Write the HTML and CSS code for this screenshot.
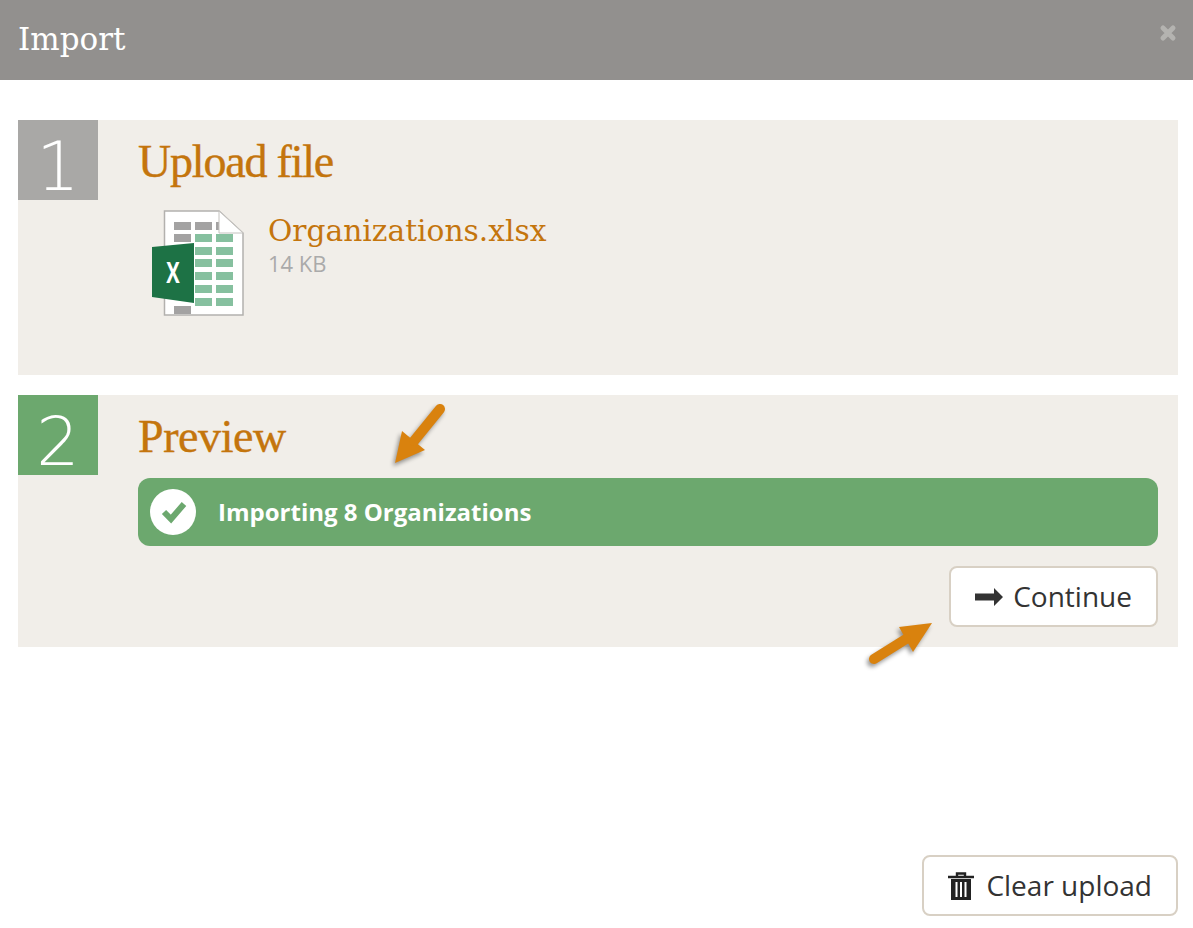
FILE: index.html
```html
<!DOCTYPE html>
<html lang="en">
<head>
  <meta charset="UTF-8" />
  <meta name="viewport" content="width=device-width, initial-scale=1.0" />
  <title>Import</title>
  <link rel="stylesheet" href="styles.css">
</head>
<body>
  <header class="modal-header">
    <h1>Import</h1>
    <svg class="close-icon" viewBox="0 0 18 18" width="18" height="18">
      <path d="M4 4 L14 14 M14 4 L4 14" stroke="#b4b3b0" stroke-width="5" stroke-linecap="round" />
    </svg>
  </header>

  <main class="modal-body">
    <section class="step step-upload">
      <div class="step-number">1</div>
      <div class="step-content">
        <h2>Upload file</h2>
        <div class="file">
          <svg class="file-icon" viewBox="0 0 92 106" width="92" height="106">
            <path d="M12.5 1 H67 L91 23 V105 H12.5 Z" fill="#fff" stroke="#b3b1ae" stroke-width="1.5" />
            <g fill="#a3a2a2">
              <rect x="22" y="12" width="17" height="8" />
              <rect x="43" y="12" width="17" height="8" />
              <rect x="64" y="12" width="4" height="8" />
              <rect x="22" y="24" width="17" height="8" />
              <rect x="22" y="96" width="17" height="8" />
            </g>
            <path d="M67 1 V23 H91 Z" fill="#fff" stroke="#c4c2bf" stroke-width="1" />
            <g fill="#86c09f">
              <rect x="43" y="24" width="17" height="8" />
              <rect x="64" y="24" width="17" height="8" />
              <rect x="43" y="37" width="17" height="8" />
              <rect x="64" y="37" width="17" height="8" />
              <rect x="43" y="49" width="17" height="8" />
              <rect x="64" y="49" width="17" height="8" />
              <rect x="43" y="62" width="17" height="8" />
              <rect x="64" y="62" width="17" height="8" />
              <rect x="43" y="75" width="17" height="8" />
              <rect x="64" y="75" width="17" height="8" />
              <rect x="43" y="88" width="17" height="8" />
              <rect x="64" y="88" width="17" height="8" />
            </g>
            <path d="M0 37 L42 33 V93 L0 87 Z" fill="#1d7245" />
            <text class="file-icon-x" transform="translate(21 73) scale(0.72 1)">X</text>
          </svg>
          <div class="file-info">
            <a class="file-name">Organizations.xlsx</a>
            <span class="file-size">14 KB</span>
          </div>
        </div>
      </div>
    </section>

    <section class="step step-preview">
      <div class="step-number done">2</div>
      <div class="step-content">
        <h2>Preview</h2>
        <div class="status">
          <svg class="status-icon" viewBox="0 0 48 48" width="48" height="48">
            <circle cx="24" cy="24" r="23" fill="#fff" />
            <path d="M15 24 L22 31 L35 16" fill="none" stroke="#6ca86e" stroke-width="6" />
          </svg>
          <span class="status-text">Importing 8 Organizations</span>
        </div>
        <div class="actions">
          <button class="btn">
            <svg viewBox="0 0 28 18" width="28" height="18"><path d="M0 5.5 H19 V0 L28 9 L19 18 V12.5 H0 Z" fill="#333" /></svg>
            <span class="btn-label">Continue</span>
          </button>
        </div>
      </div>
    </section>
  </main>

  <footer class="modal-footer">
    <button class="btn btn-clear">
      <svg viewBox="0 0 26 28" width="26" height="28">
        <path d="M9 4 V1.5 H17 V4 M0 5 H26" fill="none" stroke="#222" stroke-width="2.4" />
        <path fill-rule="evenodd" d="M3 7 H23 V28 H3 Z M7.5 10 V25 H9.5 V10 Z M12 10 V25 H14 V10 Z M16.5 10 V25 H18.5 V10 Z" fill="#222" />
      </svg>
      <span class="btn-label">Clear upload</span>
    </button>
  </footer>

  <svg class="arrow arrow-preview" viewBox="0 0 60 70" width="60" height="70">
    <path d="M3 61 L10 29 L33 48 Z" fill="#d9820e" />
    <path d="M48 7 L22 39" fill="none" stroke="#d9820e" stroke-width="10" stroke-linecap="round" />
  </svg>
  <svg class="arrow arrow-continue" viewBox="0 0 72 48" width="72" height="48">
    <path d="M68 3 L35 7 L49 32 Z" fill="#d9820e" />
    <path d="M10 39 L42 19" fill="none" stroke="#d9820e" stroke-width="10" stroke-linecap="round" />
  </svg>
</body>
</html>
```

FILE: styles.css
```css
body {
  font-family: "Open Sans", Arial, sans-serif;
  margin: 0;
  padding: 0;
  background: #fff;
  color: #333;
  height: 928px;
  position: relative;
  overflow: hidden;
}
.modal-header {
  height: 80px;
  background: #92908e;
  display: flex;
  align-items: center;
  justify-content: space-between;
  padding: 0 16px 0 18px;
}
.modal-header h1 {
  margin: 0 0 2px;
  font-family: "DejaVu Serif", serif;
  font-weight: normal;
  font-size: 31px;
  color: #fff;
}
.close-icon {
  margin-bottom: 14px;
}
.modal-body {
  padding: 40px 15px 0 18px;
}
.step {
  background: #f1eee9;
  display: flex;
  margin-bottom: 20px;
}
.step-upload {
  height: 255px;
}
.step-preview {
  height: 252px;
}
.step-number {
  width: 80px;
  height: 80px;
  background: #a9a8a6;
  color: #fff;
  font-family: "DejaVu Sans", sans-serif;
  font-weight: 200;
  font-size: 68px;
  line-height: 94px;
  text-align: center;
}
.step-number.done {
  background: #6ca86e;
}
.step-content {
  flex: 1;
  margin-left: 40px;
  margin-right: 20px;
}
.step-content h2 {
  margin: 15px 0 0;
  font-family: "Liberation Serif", serif;
  font-weight: normal;
  font-size: 46px;
  line-height: 54px;
  color: #c4750d;
  -webkit-text-stroke: 0.4px #c4750d;
}
.step-upload h2 {
  letter-spacing: -1.2px;
}
.step-preview h2 {
  letter-spacing: -0.4px;
}
.file {
  display: flex;
  margin-top: 21px;
  margin-left: 14px;
}
.file-info {
  display: flex;
  flex-direction: column;
  margin-left: 24px;
  padding-top: 2px;
}
.file-icon-x {
  font-family: "Open Sans", sans-serif;
  font-weight: bold;
  font-size: 28px;
  fill: #fff;
  text-anchor: middle;
}
.file-name {
  font-family: "DejaVu Serif", serif;
  font-size: 29.7px;
  line-height: 38px;
  color: #c4750d;
}
.file-size {
  font-size: 22px;
  line-height: 26px;
  color: #aaa;
}
.status {
  display: flex;
  align-items: center;
  height: 68px;
  margin-top: 14px;
  padding-left: 11px;
  background: #6ca86e;
  border-radius: 12px;
  color: #fff;
  font-weight: bold;
  font-size: 24px;
}
.status-icon {
  margin-right: 21px;
}
.status-text {
  margin-bottom: 2px;
}
.actions {
  display: flex;
  justify-content: flex-end;
  margin-top: 20px;
}
.btn {
  display: flex;
  align-items: center;
  gap: 10px;
  height: 61px;
  padding: 0 24px;
  background: #fff;
  border: 2px solid #d8d0c4;
  border-radius: 8px;
  font-family: "Open Sans", sans-serif;
  font-size: 28px;
  color: #333;
}
.btn-clear {
  gap: 12px;
}
.btn-label {
  margin-bottom: 2px;
}
.modal-footer {
  display: flex;
  justify-content: flex-end;
  padding-right: 15px;
  margin-top: 208px;
}
.arrow {
  position: absolute;
  filter: drop-shadow(-2px 3px 2px rgba(0, 0, 0, 0.4));
}
.arrow-preview {
  left: 392px;
  top: 402px;
}
.arrow-continue {
  left: 864px;
  top: 620px;
}
```
